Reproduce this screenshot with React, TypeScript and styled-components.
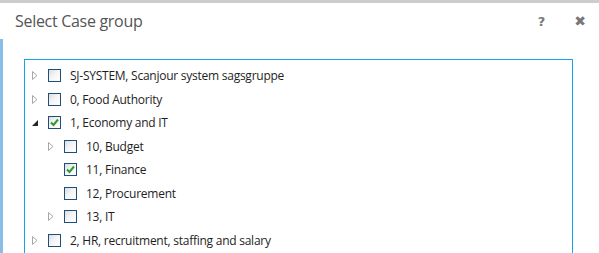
import React from 'react';
import styled, {createGlobalStyle} from "styled-components";

const GlobalStyle = createGlobalStyle`
  html, body {
    margin: 0;
    padding: 0;
    background: #fff;
  }
  body {
    font-family: "Open Sans", "Noto Sans", sans-serif;
  }
`

type Node = {
    label: string
    level: number
    expander: "none" | "closed" | "open"
    checked?: boolean
}

const nodes: Node[] = [
    {label: "SJ-SYSTEM, Scanjour system sagsgruppe", level: 0, expander: "closed"},
    {label: "0, Food Authority", level: 0, expander: "closed"},
    {label: "1, Economy and IT", level: 0, expander: "open", checked: true},
    {label: "10, Budget", level: 1, expander: "closed"},
    {label: "11, Finance", level: 1, expander: "none", checked: true},
    {label: "12, Procurement", level: 1, expander: "none"},
    {label: "13, IT", level: 1, expander: "closed"},
    {label: "2, HR, recruitment, staffing and salary", level: 0, expander: "closed"},
]

const Expander: React.FC<{ state: Node["expander"] }> = ({state}) => {
    if (state === "none") return <ExpanderSlot/>
    return (
        <ExpanderSlot>
            {state === "closed" ? (
                <svg width="6" height="9" viewBox="0 0 6 9">
                    <path d="M0.5 0.5 L5 4.5 L0.5 8.5 Z" fill="none" stroke="#a6a6a6" strokeWidth="1"/>
                </svg>
            ) : (
                <svg width="6" height="6" viewBox="0 0 6 6">
                    <path d="M6 0 L6 6 L0 6 Z" fill="#262626"/>
                </svg>
            )}
        </ExpanderSlot>
    )
}

const Check: React.FC<{ checked?: boolean }> = ({checked}) => (
    <CheckBox>
        {checked && (
            <svg width="11" height="11" viewBox="0 0 11 11">
                <path d="M2 5.5 L4.5 8 L9 2.5" fill="none" stroke="#2d9a2d" strokeWidth="2"/>
            </svg>
        )}
    </CheckBox>
)

export default function App() {
    return (
        <>
            <GlobalStyle/>
            <Dialog>
                <Header>
                    <Title>Select Case group</Title>
                    <Actions>
                        <HeaderButton>?</HeaderButton>
                        <HeaderButton size={14}>✖</HeaderButton>
                    </Actions>
                </Header>
                <Body>
                    <TreePanel>
                        {nodes.map((n) => (
                            <Row key={n.label} level={n.level}>
                                <Expander state={n.expander}/>
                                <Check checked={n.checked}/>
                                <Label>{n.label}</Label>
                            </Row>
                        ))}
                    </TreePanel>
                </Body>
            </Dialog>
        </>
    )
}

const Dialog = styled.div`
  width: 599px;
  height: 253px;
  overflow: hidden;
  border-top: 3px solid #cdcdcd;
  box-sizing: border-box;
  display: flex;
  flex-direction: column;
`

const Header = styled.div`
  height: 36px;
  display: flex;
  align-items: center;
  justify-content: space-between;
  padding: 0 13px 0 15px;
  flex-shrink: 0;
`

const Title = styled.h2`
  margin: 0;
  font-size: 16px;
  letter-spacing: -0.3px;
  font-weight: 400;
  color: #555;
`

const Actions = styled.div`
  display: flex;
  gap: 29px;
  align-items: center;
`

const HeaderButton = styled.span<{ size?: number }>`
  color: #777;
  font-size: ${p => p.size ?? 13}px;
  font-weight: 700;
  font-family: "DejaVu Sans", sans-serif;
`

const Body = styled.div`
  flex: 1;
  border-left: 3px solid #86bde9;
  padding: 20px 26px 0 21px;
`

const TreePanel = styled.div`
  border: 1px solid #12a7e6;
  border-bottom: none;
  height: 200px;
  padding-top: 4px;
  background: #fff;
`

const Row = styled.div<{ level: number }>`
  height: 23.5px;
  display: flex;
  align-items: center;
  padding-left: ${p => 7 + p.level * 16}px;
`

const ExpanderSlot = styled.span`
  width: 16px;
  display: flex;
  align-items: center;
  justify-content: flex-start;
  flex-shrink: 0;
`

const CheckBox = styled.span`
  width: 11px;
  height: 11px;
  border: 1px solid #1f4e7d;
  background: linear-gradient(135deg, #dcdcdc 0%, #f4f4f4 45%, #fff 100%);
  display: flex;
  align-items: center;
  justify-content: center;
  flex-shrink: 0;
`

const Label = styled.span`
  margin-left: 9px;
  font-size: 12px;
  letter-spacing: -0.25px;
  color: #1e1e1e;
  white-space: nowrap;
`
